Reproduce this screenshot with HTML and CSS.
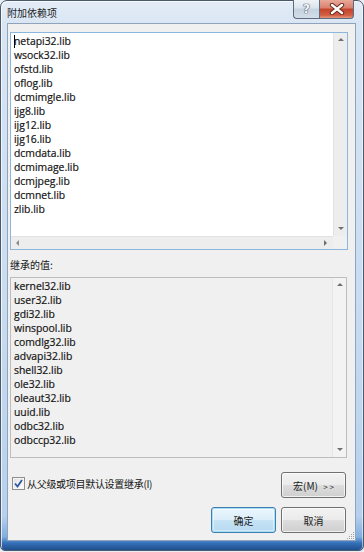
FILE: index.html
```html
<!DOCTYPE html>
<html>
<head>
<meta charset="utf-8">
<link rel="stylesheet" href="styles.css">
</head>
<body>
<div class="window">
  <div class="titlebar">
    <span class="title">附加依赖项</span>
    <div class="caption-btns">
      <div class="cap help">?</div>
      <div class="cap close">
        <svg width="16" height="12" viewBox="0 0 16 12"><path d="M3 2 L13 10 M13 2 L3 10" stroke="#6b2a1c" stroke-width="4.4" stroke-linecap="round"/><path d="M3 2 L13 10 M13 2 L3 10" stroke="#ffffff" stroke-width="2.4" stroke-linecap="round"/></svg>
      </div>
    </div>
  </div>
  <div class="client">
    <div class="edit-box">
      <div class="edit-text">
        <div class="line"><span class="caret"></span>netapi32.lib</div>
        <div class="line">wsock32.lib</div>
        <div class="line">ofstd.lib</div>
        <div class="line">oflog.lib</div>
        <div class="line">dcmimgle.lib</div>
        <div class="line">ijg8.lib</div>
        <div class="line">ijg12.lib</div>
        <div class="line">ijg16.lib</div>
        <div class="line">dcmdata.lib</div>
        <div class="line">dcmimage.lib</div>
        <div class="line">dcmjpeg.lib</div>
        <div class="line">dcmnet.lib</div>
        <div class="line">zlib.lib</div>
      </div>
      <div class="vscroll">
        <span class="arrow up"></span>
        <span class="arrow down"></span>
      </div>
      <div class="hscroll">
        <span class="arrow left"></span>
        <span class="arrow right"></span>
      </div>
      <div class="corner"></div>
    </div>
    <div class="label">继承的值:</div>
    <div class="list-box">
      <div class="list-text">
        <div class="line">kernel32.lib</div>
        <div class="line">user32.lib</div>
        <div class="line">gdi32.lib</div>
        <div class="line">winspool.lib</div>
        <div class="line">comdlg32.lib</div>
        <div class="line">advapi32.lib</div>
        <div class="line">shell32.lib</div>
        <div class="line">ole32.lib</div>
        <div class="line">oleaut32.lib</div>
        <div class="line">uuid.lib</div>
        <div class="line">odbc32.lib</div>
        <div class="line">odbccp32.lib</div>
      </div>
      <div class="vscroll light">
        <span class="arrow up"></span>
        <span class="arrow down"></span>
      </div>
    </div>
    <div class="row-check">
      <label class="check">
        <span class="box"><svg width="9" height="9" viewBox="0 0 9 9"><path d="M1 4.5 L3.5 7.5 L8 1" fill="none" stroke="#2f55a4" stroke-width="1.8"/></svg></span>
        <span class="check-text">从父级或项目默认设置继承(I)</span>
      </label>
      <button class="btn">宏(M) <span class="gt">&gt; &gt;</span></button>
    </div>
    <div class="row-buttons">
      <button class="btn default">确定</button>
      <button class="btn">取消</button>
    </div>
    <svg class="grip" width="10" height="10" viewBox="0 0 10 10">
      <g fill="#a0a0a0">
        <rect x="8" y="2" width="1" height="1"/><rect x="6" y="4" width="1" height="1"/><rect x="8" y="4" width="1" height="1"/>
        <rect x="4" y="6" width="1" height="1"/><rect x="6" y="6" width="1" height="1"/><rect x="8" y="6" width="1" height="1"/>
        <rect x="2" y="8" width="1" height="1"/><rect x="4" y="8" width="1" height="1"/><rect x="6" y="8" width="1" height="1"/><rect x="8" y="8" width="1" height="1"/>
      </g>
    </svg>
  </div>
</div>
</body>
</html>
```

FILE: styles.css
```css
html, body {
  margin: 0;
  padding: 0;
}
body {
  width: 364px;
  height: 552px;
  background: #e9eef4;
  overflow: hidden;
}
.window {
  box-sizing: border-box;
  width: 364px;
  height: 551px;
  border: 1px solid #4a5a6c;
  border-radius: 7px 7px 5px 5px;
  background: linear-gradient(to bottom, #e4edf7 0px, #d8e5f3 24px, #c9dcf0 300px, #b6d0ed 515px, #80addf 536px, #3570b8 542px, #1f4f8e 549px);
  box-shadow: inset 1px 1px 0 rgba(255,255,255,0.7), inset -1px 0 0 rgba(255,255,255,0.5);
  display: flex;
  flex-direction: column;
}
.titlebar {
  height: 22px;
  display: flex;
  align-items: flex-start;
  padding: 0 9px 0 6px;
}
.title {
  font-family: "Noto Sans CJK SC", sans-serif;
  font-size: 10px;
  line-height: 12px;
  color: #1b1b1b;
  margin-top: 6px;
}
.caption-btns {
  margin-left: auto;
  display: flex;
  margin-top: -1px;
}
.cap {
  box-sizing: border-box;
  height: 19px;
  border: 1px solid #5d6b7d;
  border-top: none;
  display: flex;
  align-items: center;
  justify-content: center;
}
.help {
  width: 26px;
  border-radius: 0 0 0 4px;
  border-right: none;
  background: linear-gradient(to bottom, #eef3f8 0%, #dbe4ee 45%, #c5d2e0 50%, #d3dee9 100%);
  font-family: "DejaVu Sans", sans-serif;
  font-weight: bold;
  font-size: 12px;
  color: #f7f9fb;
  text-shadow: 0 0 1px #4b5563, 0 0 1px #4b5563, 0 0 1px #4b5563;
}
.close {
  width: 35px;
  border-radius: 0 0 4px 0;
  background: linear-gradient(to bottom, #e9a99a 0%, #d8806c 45%, #c2432a 50%, #d35f45 85%, #e39a7d 100%);
}
.client {
  position: relative;
  box-sizing: border-box;
  height: 518px;
  margin: 0 7px 0 6px;
  border: 1px solid #8fa3ba;
  background: #f0f0f0;
  padding: 8px 0 0 2px;
  font-family: "Open Sans", sans-serif;
  color: #141414;
}
.edit-box {
  box-sizing: border-box;
  width: 338px;
  height: 218px;
  border: 1px solid #8db6df;
  background: #ffffff;
  display: grid;
  grid-template-columns: 1fr 14px;
  grid-template-rows: 1fr 13px;
}
.edit-text, .list-text {
  padding: 1px 0 0 3px;
  font-size: 10.4px;
  line-height: 14px;
  overflow: hidden;
  -webkit-text-stroke: 0.2px #141414;
}
.line {
  height: 14px;
  white-space: nowrap;
}
.caret {
  display: inline-block;
  width: 1px;
  height: 13px;
  background: #000;
  vertical-align: -3px;
  margin-right: -1px;
}
.vscroll {
  position: relative;
  background: #ededed;
  border-left: 1px solid #e2e2e2;
  display: flex;
  flex-direction: column;
  justify-content: space-between;
  align-items: center;
  padding: 5px 0 6px;
}
.vscroll.light {
  background: #f3f3f3;
  border-left: 1px solid #e6e6e6;
}
.hscroll {
  background: #ededed;
  border-top: 1px solid #e2e2e2;
  display: flex;
  justify-content: space-between;
  align-items: center;
  padding: 0 6px 0 5px;
}
.corner {
  background: #f0f0f0;
}
.arrow {
  width: 0;
  height: 0;
  display: block;
}
.arrow.up {
  border-left: 3px solid transparent;
  border-right: 3px solid transparent;
  border-bottom: 3px solid #707070;
}
.arrow.down {
  border-left: 3px solid transparent;
  border-right: 3px solid transparent;
  border-top: 3px solid #707070;
}
.arrow.left {
  border-top: 3px solid transparent;
  border-bottom: 3px solid transparent;
  border-right: 3px solid #8a8a8a;
}
.arrow.right {
  border-top: 3px solid transparent;
  border-bottom: 3px solid transparent;
  border-left: 3px solid #707070;
}
.label {
  height: 27px;
  box-sizing: border-box;
  padding: 9px 0 0 0;
  font-family: "Noto Sans CJK SC", sans-serif;
  font-size: 10px;
  line-height: 12px;
}
.list-box {
  box-sizing: border-box;
  width: 337px;
  height: 181px;
  border: 1px solid #bdbdbd;
  background: #f0f0f0;
  display: grid;
  grid-template-columns: 1fr 14px;
}
.row-check {
  display: flex;
  align-items: center;
  margin-top: 14px;
  padding: 0 9px 0 2px;
}
.check {
  display: flex;
  align-items: center;
  font-family: "Noto Sans CJK SC", sans-serif;
  font-size: 10px;
  line-height: 12px;
  margin-top: -3px;
}
.box {
  box-sizing: border-box;
  width: 13px;
  height: 13px;
  border: 1px solid #8e8f8f;
  background: linear-gradient(135deg, #dcdcdc 0%, #f4f4f4 60%, #ffffff 100%);
  box-shadow: inset 0 0 0 1px #f5f5f5;
  display: flex;
  align-items: center;
  justify-content: center;
  margin-right: 2px;
}
.check-text {
  letter-spacing: -0.3px;
}
.btn {
  margin-left: auto;
  box-sizing: border-box;
  width: 65px;
  height: 26px;
  border: 1px solid #707070;
  border-radius: 3px;
  background: linear-gradient(to bottom, #f2f2f2 0%, #ebebeb 48%, #dddddd 52%, #cfcfcf 100%);
  box-shadow: inset 0 0 0 1px rgba(255,255,255,0.7);
  font-family: "Noto Sans CJK SC", sans-serif;
  font-size: 10px;
  color: #1a1a1a;
  padding: 0;
}
.gt {
  font-size: 8px;
  margin-left: 3px;
}
.row-buttons {
  display: flex;
  justify-content: flex-end;
  gap: 5px;
  margin-top: 9px;
  padding-right: 9px;
}
.row-buttons .btn {
  margin-left: 0;
}
.btn.default {
  border-color: #3c7fb1;
  box-shadow: inset 0 0 0 1px #a8dcf7, inset 0 0 0 2px rgba(255,255,255,0.4);
  background: linear-gradient(to bottom, #eaf6fd 0%, #dceef9 48%, #c6e3f5 52%, #b6d9f1 100%);
}
.grip {
  position: absolute;
  right: 0;
  bottom: 0;
}
```
